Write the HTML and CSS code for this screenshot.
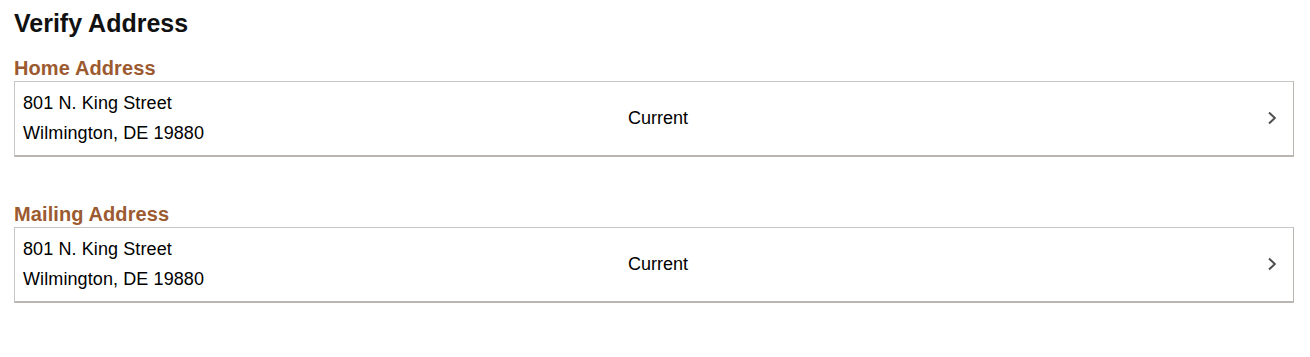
FILE: index.html
```html
<!DOCTYPE html>
<html>
<head>
<meta charset="utf-8">
<link rel="stylesheet" href="styles.css">
</head>
<body>
<div class="page">
  <h1 class="title">Verify Address</h1>
  <section class="group">
    <h2 class="group-title">Home Address</h2>
    <div class="row">
      <div class="addr">
        <div>801 N. King Street</div>
        <div>Wilmington, DE 19880</div>
      </div>
      <div class="status">Current</div>
      <svg class="chev" width="10" height="14" viewBox="0 0 10 14"><path d="M2 1.5 L7.8 7 L2 12.5" fill="none" stroke="#505050" stroke-width="2"/></svg>
    </div>
  </section>
  <section class="group second">
    <h2 class="group-title">Mailing Address</h2>
    <div class="row">
      <div class="addr">
        <div>801 N. King Street</div>
        <div>Wilmington, DE 19880</div>
      </div>
      <div class="status">Current</div>
      <svg class="chev" width="10" height="14" viewBox="0 0 10 14"><path d="M2 1.5 L7.8 7 L2 12.5" fill="none" stroke="#505050" stroke-width="2"/></svg>
    </div>
  </section>
</div>
</body>
</html>
```
FILE: styles.css
```css
* { box-sizing: border-box; }
html, body { margin: 0; padding: 0; background: #fff; }
body { font-family: "Liberation Sans", Arial, sans-serif; color: #000; }
.page { padding: 9px 16px 0 14px; }
.title {
  margin: 0;
  font-size: 25px;
  line-height: 28px;
  font-weight: bold;
  color: #111;
}
.group { margin-top: 18px; }
.group.second { margin-top: 44px; }
.group-title {
  margin: 0;
  font-size: 20px;
  line-height: 26px;
  font-weight: bold;
  color: #9c5a30;
  letter-spacing: 0.1px;
}
.row {
  display: grid;
  grid-template-columns: 605px 1fr auto;
  align-items: center;
  border: 1px solid #c9c7c5;
  border-right-color: #bab6b2;
  border-bottom: 2px solid #bab6b2;
  padding: 6px 16px 7px 8px;
  font-size: 18px;
}
.addr div { line-height: 30px; letter-spacing: 0.1px; }
.status { line-height: 22px; }
.chev { display: block; }
```
